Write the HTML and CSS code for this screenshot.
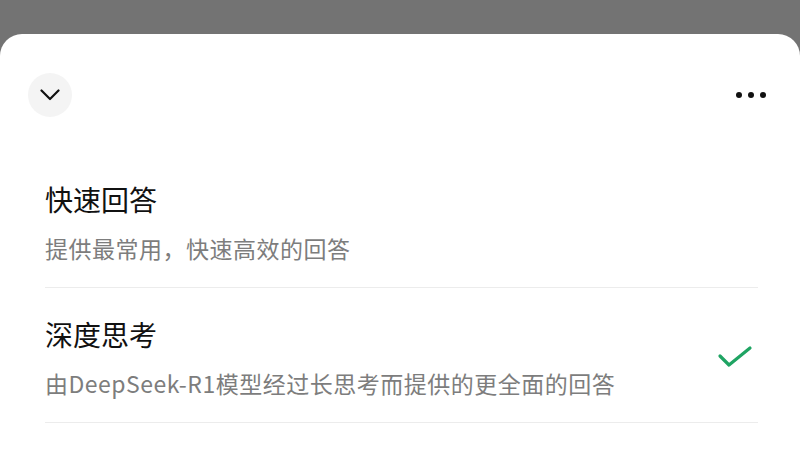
FILE: index.html
```html
<!DOCTYPE html>
<html lang="zh-CN">
<head>
  <meta charset="UTF-8" />
  <meta name="viewport" content="width=device-width, initial-scale=1.0"/>
  <title>模式选择</title>
  <link rel="stylesheet" href="styles.css">
</head>
<body>
  <div class="sheet">
    <div class="sheet-header">
      <button class="close-btn" aria-label="收起">
        <svg width="20" height="12" viewBox="0 0 20 12">
          <path d="M1.5 1.5 L10 10 L18.5 1.5" fill="none" stroke="#111" stroke-width="2.2" stroke-linecap="round" stroke-linejoin="round"/>
        </svg>
      </button>
      <button class="more-btn" aria-label="更多">
        <span class="dot"></span><span class="dot"></span><span class="dot"></span>
      </button>
    </div>

    <ul class="options">
      <li class="option">
        <div class="option-text">
          <div class="option-title">快速回答</div>
          <div class="option-desc">提供最常用，快速高效的回答</div>
        </div>
      </li>
      <li class="option selected">
        <div class="option-text">
          <div class="option-title">深度思考</div>
          <div class="option-desc">由DeepSeek-R1模型经过长思考而提供的更全面的回答</div>
        </div>
        <svg class="check" width="36" height="24" viewBox="0 0 36 24">
          <path d="M3 11 L12 20 L33 3" fill="none" stroke="#1fa463" stroke-width="3.2" stroke-linecap="round" stroke-linejoin="round"/>
        </svg>
      </li>
    </ul>
  </div>
</body>
</html>
```

FILE: styles.css
```css
* {
  box-sizing: border-box;
}

body {
  margin: 0;
  height: 450px;
  overflow: hidden;
  background: #737373;
  font-family: 'Noto Sans CJK SC', 'Noto Sans', sans-serif;
  color: #111;
}

.sheet {
  margin-top: 34px;
  height: 416px;
  background: #fff;
  border-radius: 22px 22px 0 0;
}

.sheet-header {
  display: flex;
  justify-content: space-between;
  align-items: center;
  padding: 39px 34px 0 28px;
}

.close-btn {
  width: 44px;
  height: 44px;
  border: none;
  border-radius: 50%;
  background: #f4f4f4;
  display: flex;
  align-items: center;
  justify-content: center;
  padding: 0;
  cursor: pointer;
}

.more-btn {
  display: flex;
  gap: 6px;
  border: none;
  background: none;
  padding: 0;
  cursor: pointer;
}

.dot {
  width: 6px;
  height: 6px;
  border-radius: 50%;
  background: #111;
}

.options {
  list-style: none;
  margin: 36px 42px 0 45px;
  padding: 0;
}

.option {
  display: flex;
  align-items: center;
  justify-content: space-between;
  padding: 28px 0 24px;
  border-bottom: 1px solid #ececec;
}

.option-title {
  font-size: 28px;
  line-height: 36px;
}

.option-desc {
  margin-top: 16px;
  font-size: 23px;
  line-height: 30px;
  letter-spacing: 0.5px;
  color: #7d7d7d;
}

.check {
  margin-right: 5px;
}
```
